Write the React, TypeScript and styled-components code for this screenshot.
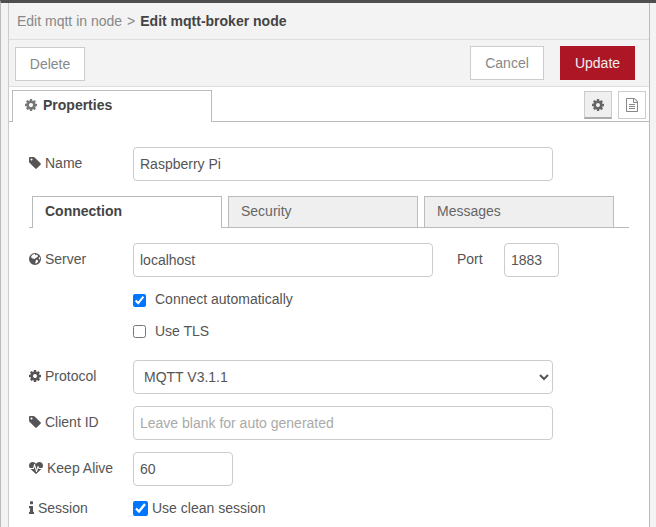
import React from "react";
import styled, { createGlobalStyle } from "styled-components";

const GlobalStyle = createGlobalStyle`
  *, *::before, *::after { box-sizing: border-box; }
  body {
    margin: 0;
    overflow: hidden;
    background: #f3f3f3;
    color: #555;
    font: 14px/20px "Liberation Sans", Arial, sans-serif;
  }
`;

const Workspace = styled.div`
  height: 527px;
  border-top: 3px solid #4f4f4f;
  border-left: 1px solid #bbb;
  padding-left: 7px;
  display: flex;
  overflow: hidden;
`;

const Tray = styled.main`
  width: 642px;
  border: solid #bbb;
  border-width: 0 1px;
  border-left-color: #ccc;
  background: #fff;
  display: flex;
  flex-direction: column;
`;

const TrayHeader = styled.header`
  height: 37px;
  padding: 8px;
  background: #f3f3f3;
  border-bottom: 1px solid #ddd;
  color: #888;
  white-space: pre;

  b { color: #444; }
`;

const Separator = styled.span`
  margin: 0 5px;
`;

const Toolbar = styled.div`
  height: 47px;
  padding: 6px 14px 0 6px;
  display: flex;
  align-items: flex-start;
  gap: 16px;
  background: #f3f3f3;
  border-bottom: 1px solid #ddd;
`;

const Button = styled.button<{ $primary?: boolean; $width: number }>`
  width: ${(p) => p.$width}px;
  height: 34px;
  padding: 0;
  font: inherit;
  color: ${(p) => (p.$primary ? "#eee" : "#888")};
  background: ${(p) => (p.$primary ? "#ad1625" : "#fff")};
  border: 1px solid ${(p) => (p.$primary ? "#ad1625" : "#ccc")};
`;

const DeleteButton = styled(Button)`
  margin: 1px auto 0 0;
`;

const TrayTabs = styled.div`
  height: 35px;
  padding: 3px 3px 0;
  display: flex;
  flex: none;
  align-items: flex-start;
  box-shadow: inset 0 -1px #bbb;
`;

const PropertiesTab = styled.div`
  width: 200px;
  height: 32px;
  margin-right: auto;
  padding: 4px 12px;
  display: flex;
  gap: 6px;
  border: 1px solid #bbb;
  border-bottom: 0;
  background: #fff;
  color: #444;
  font-weight: bold;
`;

const IconButton = styled.button<{ $selected?: boolean }>`
  width: 28px;
  height: 28px;
  margin: 1px 0 0 6px;
  padding: 0;
  display: flex;
  align-items: center;
  justify-content: center;
  color: ${(p) => (p.$selected ? "#666" : "#888")};
  background: ${(p) => (p.$selected ? "#efefef" : "#fff")};
  border: 1px solid #ccc;
  border-bottom: ${(p) => (p.$selected ? "2px solid #aaa" : "1px solid #ccc")};
`;

const Form = styled.form`
  padding: 25px 20px 0;
  display: flex;
  flex-direction: column;
`;

const Row = styled.div`
  height: 34px;
  margin-bottom: 12px;
  display: flex;
  flex: none;
`;

const Label = styled.label`
  width: 104px;
  padding-top: 6px;
  flex: none;
  display: flex;
  gap: 4px;
  white-space: nowrap;
`;

const PortLabel = styled.label`
  width: 47px;
  margin-left: 24px;
  padding-top: 6px;
`;

const Input = styled.input<{ $width: number }>`
  width: ${(p) => p.$width}px;
  height: 34px;
  margin: 0;
  padding: 0 6px;
  font: inherit;
  color: #555;
  background: #fff;
  border: 1px solid #ccc;
  border-radius: 4px;
  outline: none;

  &::placeholder { color: #aaa; }
`;

const Select = styled.select`
  width: 420px;
  height: 34px;
  margin: 0;
  padding: 0 0 0 6px;
  font: inherit;
  color: #555;
  background: #fff;
  border: 1px solid #ccc;
  border-radius: 4px;
`;

const Tabs = styled.div`
  width: 600px;
  height: 32px;
  margin: 3px 0 15px;
  padding-left: 3px;
  display: flex;
  gap: 6px;
  box-shadow: inset 0 -1px #bbb;
`;

const Tab = styled.div<{ $active?: boolean }>`
  width: 190px;
  height: ${(p) => (p.$active ? 32 : 31)}px;
  padding: 4px 12px;
  border: 1px solid #bbb;
  border-bottom: 0;
  background: ${(p) => (p.$active ? "#fff" : "#efefef")};
  color: ${(p) => (p.$active ? "#444" : "#666")};
  font-weight: ${(p) => (p.$active ? "bold" : "normal")};
`;

const CheckRow = styled.label<{ $last?: boolean }>`
  height: 20px;
  margin: 0 0 ${(p) => (p.$last ? 19 : 12)}px 104px;
  display: flex;
  gap: 9px;
`;

const Checkbox = styled.input<{ $size: number; $top: number }>`
  width: ${(p) => p.$size}px;
  height: ${(p) => p.$size}px;
  margin: ${(p) => p.$top}px 0 0;
`;

const SessionRow = styled.div`
  display: flex;
`;

const SessionOption = styled.label`
  display: flex;
  gap: 4px;
`;

const SessionLabel = styled(Label)`
  padding-top: 0;
`;

const Glyph = styled.svg<{ $top: number }>`
  flex: none;
  margin-top: ${(p) => p.$top}px;
  fill: currentColor;
`;

const shapes = {
  cog: {
    box: "128 0 1536 1792",
    width: 12,
    d: "M1152 896q0-106-75-181t-181-75-181 75-75 181 75 181 181 75 181-75 75-181zm512-109v222q0 12-8 23t-20 13l-185 28q-19 54-39 91 35 50 107 138 10 12 10 25t-9 23q-27 37-99 108t-94 71q-12 0-26-9l-138-108q-44 23-91 38-16 136-29 186-7 28-36 28h-222q-14 0-24.5-8.5t-11.5-21.5l-28-184q-49-16-90-37l-141 107q-10 9-25 9-14 0-25-11-126-114-165-168-7-10-7-23 0-12 8-23 15-21 51-66.5t54-70.5q-27-50-41-99l-183-27q-13-2-21-12.5t-8-23.5v-222q0-12 8-23t19-13l186-28q14-46 39-92-40-57-107-138-10-12-10-24 0-10 9-23 26-36 98.5-107.5t94.5-71.5q13 0 26 10l138 107q44-23 91-38 16-136 29-186 7-28 36-28h222q14 0 24.5 8.5t11.5 21.5l28 184q49 16 90 37l142-107q9-9 24-9 13 0 25 10 129 119 165 170 7 8 7 22 0 12-8 23-15 21-51 66.5t-54 70.5q26 50 41 98l183 28q13 2 21 12.5t8 23.5z",
  },
  tag: {
    box: "128 0 1536 1792",
    width: 12,
    d: "M576 448q0-53-37.5-90.5t-90.5-37.5-90.5 37.5-37.5 90.5 37.5 90.5 90.5 37.5 90.5-37.5 37.5-90.5zm1067 576q0 53-37 90l-491 492q-39 37-91 37-53 0-90-37l-715-716q-38-37-64.5-101t-26.5-117v-416q0-52 38-90t90-38h416q53 0 117 26.5t102 64.5l715 714q37 39 37 91z",
  },
  globe: {
    box: "128 0 1536 1792",
    width: 12,
    d: "M896 128a768 768 0 1 0 0 1536a768 768 0 1 0 0-1536zM700 290L830 240L950 290L870 420L1010 380L1100 320L1230 420L1300 560L1150 650L1040 760L920 790L860 900L760 850L700 850L600 840L430 720L400 590L500 430zM1030 1000L1170 1000L1310 1130L1250 1310L1090 1440L960 1480L930 1360L970 1200zM1400 680L1520 680L1540 860L1480 980L1370 860z",
  },
  heart: {
    box: "0 -128 1792 1792",
    width: 14,
    d: "M1280 896h305q-5 6-10 10.5t-9 7.5l-3 4-623 600q-18 18-44 18t-44-18l-624-602q-5-2-21-20h369q22 0 39.5-13.5t22.5-34.5l70-281 190 667q6 20 23 33t39 13q21 0 38-13t23-33l146-485 56 112q18 35 57 35zm512-428q0 145-103 300h-369l-111-221q-8-17-25.5-27t-36.5-8q-45 5-56 46l-129 430-196-686q-6-20-23.5-33t-39.5-13-39 13.5-22 34.5l-116 464h-423q-103-155-103-300 0-220 127-344t351-124q62 0 126.5 21.5t120 58 95.5 68.5 76 68q36-36 76-68t95.5-68.5 120-58 126.5-21.5q224 0 351 124t127 344z",
  },
  info: {
    box: "576 100 640 1536",
    width: 5,
    d: "M1216 1344v128q0 26-19 45t-45 19h-512q-26 0-45-19t-19-45v-128q0-26 19-45t45-19h64v-384h-64q-26 0-45-19t-19-45v-128q0-26 19-45t45-19h384q26 0 45 19t19 45v576h64q26 0 45 19t19 45zm-128-1152v192q0 26-19 45t-45 19h-256q-26 0-45-19t-19-45v-192q0-26 19-45t45-19h256q26 0 45 19t19 45z",
  },
  file: {
    box: "128 0 1536 1792",
    width: 12,
    d: "M1596 380q28 28 48 76t20 88v1152q0 40-28 68t-68 28h-1344q-40 0-68-28t-28-68v-1600q0-40 28-68t68-28h896q40 0 88 20t76 48zm-444-244v376h376q-10-29-22-41l-313-313q-12-12-41-22zm384 1528v-1024h-416q-40 0-68-28t-28-68v-416h-768v1536h1280zm-1024-864q0-14 9-23t23-9h704q14 0 23 9t9 23v64q0 14-9 23t-23 9h-704q-14 0-23-9t-9-23v-64zm736 224q14 0 23 9t9 23v64q0 14-9 23t-23 9h-704q-14 0-23-9t-9-23v-64q0-14 9-23t23-9h704zm0 256q14 0 23 9t9 23v64q0 14-9 23t-23 9h-704q-14 0-23-9t-9-23v-64q0-14 9-23t23-9h704z",
  },
};

function Icon({ name, top = 3 }: { name: keyof typeof shapes; top?: number }) {
  const shape = shapes[name];
  return (
    <Glyph $top={top} width={shape.width} height={14} viewBox={shape.box} preserveAspectRatio="none" aria-hidden>
      <path d={shape.d} fillRule="evenodd" />
    </Glyph>
  );
}

const TabCog = styled.span`
  display: flex;
  color: #777;
`;

export default function App() {
  return (
    <>
      <GlobalStyle />
      <Workspace>
        <Tray>
          <TrayHeader>
            Edit mqtt in node<Separator>&gt;</Separator><b>Edit mqtt-broker node</b>
          </TrayHeader>
          <Toolbar>
            <DeleteButton $width={70}>Delete</DeleteButton>
            <Button $width={74}>Cancel</Button>
            <Button $width={75} $primary>Update</Button>
          </Toolbar>
          <TrayTabs>
            <PropertiesTab>
              <TabCog><Icon name="cog" /></TabCog>
              Properties
            </PropertiesTab>
            <IconButton $selected aria-label="Properties"><Icon name="cog" top={0} /></IconButton>
            <IconButton aria-label="Description"><Icon name="file" top={0} /></IconButton>
          </TrayTabs>
          <Form>
            <Row>
              <Label><Icon name="tag" />Name</Label>
              <Input $width={420} defaultValue="Raspberry Pi" />
            </Row>
            <Tabs>
              <Tab $active>Connection</Tab>
              <Tab>Security</Tab>
              <Tab>Messages</Tab>
            </Tabs>
            <Row>
              <Label><Icon name="globe" />Server</Label>
              <Input $width={300} defaultValue="localhost" />
              <PortLabel>Port</PortLabel>
              <Input $width={55} defaultValue="1883" />
            </Row>
            <CheckRow><Checkbox type="checkbox" $size={13} $top={5} defaultChecked />Connect automatically</CheckRow>
            <CheckRow $last><Checkbox type="checkbox" $size={13} $top={4} />Use TLS</CheckRow>
            <Row>
              <Label><Icon name="cog" />Protocol</Label>
              <Select defaultValue="4"><option value="4">MQTT V3.1.1</option></Select>
            </Row>
            <Row>
              <Label><Icon name="tag" />Client ID</Label>
              <Input $width={420} placeholder="Leave blank for auto generated" />
            </Row>
            <Row>
              <Label><Icon name="heart" />Keep Alive</Label>
              <Input $width={100} defaultValue="60" />
            </Row>
            <SessionRow>
              <SessionLabel><Icon name="info" />Session</SessionLabel>
              <SessionOption><Checkbox type="checkbox" $size={15} $top={3} defaultChecked />Use clean session</SessionOption>
            </SessionRow>
          </Form>
        </Tray>
      </Workspace>
    </>
  );
}
